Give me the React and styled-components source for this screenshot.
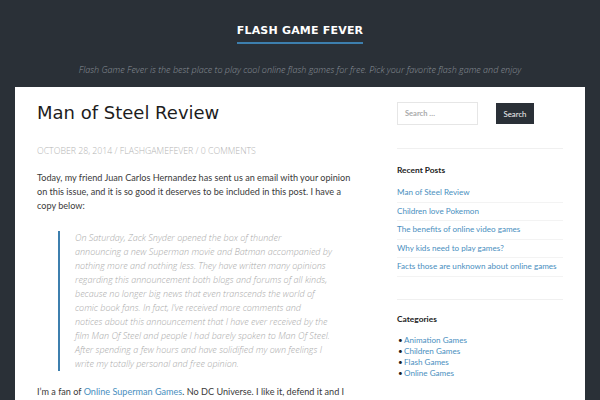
import React from 'react';
import styled, { createGlobalStyle } from 'styled-components';

const GlobalStyle = createGlobalStyle`
  body {
    margin: 0;
    background: #2a3037;
    font-family: Lato, "Open Sans", sans-serif;
  }
`;

const Page = styled.div`
  width: 600px;
  height: 400px;
  overflow: hidden;
`;

const Masthead = styled.header`
  padding-top: 18px;
  text-align: center;
`;

const SiteTitle = styled.h1`
  display: inline-block;
  margin: 0;
  padding-bottom: 5px;
  border-bottom: 2px solid #3d7fae;
  font-family: "DejaVu Sans", sans-serif;
  font-size: 11px;
  line-height: 13px;
  letter-spacing: 0.2px;
  font-weight: bold;
  color: #ffffff;
`;

const Tagline = styled.p`
  margin: 20px 0 0;
  font-family: "Open Sans", sans-serif;
  font-style: italic;
  font-weight: 300;
  font-size: 9px;
  line-height: 12px;
  color: #8a9199;
`;

const Panel = styled.div`
  margin: 11px 15px 0;
  background: #ffffff;
  padding: 15px 22px 0;
  display: grid;
  grid-template-columns: 318px 166px;
  column-gap: 42px;
  min-height: 320px;
`;

const Main = styled.main`
  color: #3a3a3a;
`;

const PostTitle = styled.h2`
  margin: 0;
  font-family: "DejaVu Sans", sans-serif;
  font-weight: normal;
  font-size: 18px;
  line-height: 22px;
  color: #1d1d1d;
`;

const Meta = styled.div`
  margin-top: 21px;
  font-family: "Open Sans", sans-serif;
  font-weight: 300;
  font-size: 8.75px;
  line-height: 12px;
  color: #b4b4b4;
  text-transform: uppercase;
`;

const Para = styled.p`
  margin: 14px 0 0;
  font-size: 9.1px;
  line-height: 14px;
`;

const Quote = styled.blockquote`
  margin: 18px 0 0 21px;
  padding: 0 0 0 15px;
  border-left: 2px solid #3d7fae;
  font-family: "Open Sans", sans-serif;
  font-style: italic;
  font-weight: 300;
  font-size: 9px;
  line-height: 14px;
  color: #a9a9a9;
  white-space: nowrap;
`;

const QuoteLine = styled.span`
  display: block;
`;

const Link = styled.a`
  color: #4a8fc0;
  text-decoration: none;
`;

const Sidebar = styled.aside`
  font-size: 8.1px;
`;

const SearchForm = styled.form`
  display: flex;
  align-items: center;
  gap: 18px;
`;

const SearchInput = styled.div`
  width: 81px;
  height: 23px;
  box-sizing: border-box;
  border: 1px solid #e6e6e6;
  padding-left: 7px;
  display: flex;
  align-items: center;
  font-weight: bold;
  color: #a9a9a9;
  font-size: 7.5px;
`;

const SearchButton = styled.div`
  width: 38px;
  height: 21px;
  background: #2a3037;
  color: #f2f2f2;
  display: flex;
  align-items: center;
  justify-content: center;
  font-size: 7.8px;
`;

const Divider = styled.hr`
  border: 0;
  border-top: 1px solid #f0f0f0;
  margin: ${p => p.$top}px 0 0;
`;

const WidgetTitle = styled.h3`
  margin: ${p => p.$top || 16}px 0 0;
  font-size: 8.4px;
  line-height: 10px;
  font-weight: bold;
  color: #222;
`;

const PostList = styled.ul`
  list-style: none;
  margin: 9px 0 0;
  padding: 0;
`;

const PostItem = styled.li`
  border-bottom: 1px solid #f3f3f3;
  line-height: 17.5px;
`;

const CatList = styled.ul`
  margin: 11px 0 0;
  padding-left: 3px;
  list-style: none;
`;

const CatItem = styled.li`
  line-height: 11px;
  color: #222;
  &::before {
    content: '•';
    display: inline-block;
    width: 6px;
    margin-left: -2px;
    color: #222;
  }
`;

const recent = [
  'Man of Steel Review',
  'Children love Pokemon',
  'The benefits of online video games',
  'Why kids need to play games?',
  'Facts those are unknown about online games',
];

const cats = ['Animation Games', 'Children Games', 'Flash Games', 'Online Games'];

const quote = [
  'On Saturday, Zack Snyder opened the box of thunder',
  'announcing a new Superman movie and Batman accompanied by',
  'nothing more and nothing less. They have written many opinions',
  'regarding this announcement both blogs and forums of all kinds,',
  'because no longer big news that even transcends the world of',
  'comic book fans. In fact, I’ve received more comments and',
  'notices about this announcement that I have ever received by the',
  'film Man Of Steel and people I had barely spoken to Man Of Steel.',
  'After spending a few hours and have solidified my own feelings I',
  'write my totally personal and free opinion.',
];

export default function App() {
  return (
    <Page>
      <GlobalStyle />
      <Masthead>
        <SiteTitle>FLASH GAME FEVER</SiteTitle>
        <Tagline>
          Flash Game Fever is the best place to play cool online flash games for free. Pick your favorite flash game and enjoy
        </Tagline>
      </Masthead>
      <Panel>
        <Main>
          <PostTitle>Man of Steel Review</PostTitle>
          <Meta>October 28, 2014 / flashgamefever / 0 Comments</Meta>
          <Para>
            Today, my friend Juan Carlos Hernandez has sent us an email with your opinion
            on this issue, and it is so good it deserves to be included in this post. I have a copy below:
          </Para>
          <Quote>
            {quote.map((l, i) => <QuoteLine key={i}>{l}</QuoteLine>)}
          </Quote>
          <Para>
            I’m a fan of <Link href="#">Online Superman Games</Link>. No DC Universe. I like it, defend it and I
            will always prefer it.
          </Para>
        </Main>
        <Sidebar>
          <SearchForm>
            <SearchInput>Search …</SearchInput>
            <SearchButton>Search</SearchButton>
          </SearchForm>
          <Divider $top={23} />
          <WidgetTitle>Recent Posts</WidgetTitle>
          <PostList>
            {recent.map(t => (
              <PostItem key={t}><Link href="#">{t}</Link></PostItem>
            ))}
          </PostList>
          <Divider $top={22} />
          <WidgetTitle $top={14}>Categories</WidgetTitle>
          <CatList>
            {cats.map(c => (
              <CatItem key={c}><Link href="#">{c}</Link></CatItem>
            ))}
          </CatList>
        </Sidebar>
      </Panel>
    </Page>
  );
}
